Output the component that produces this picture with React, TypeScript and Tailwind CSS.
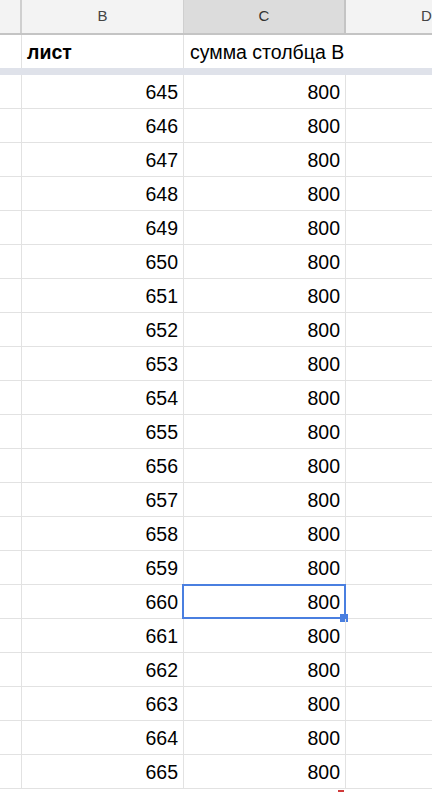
const rows = Array.from({ length: 21 }, (_, i) => 645 + i)

const grid = 'grid grid-cols-[22px_162px_162px_1fr]'

export default function App() {
  return (
    <div className="h-[792px] w-[432px] overflow-hidden bg-white font-['Liberation_Sans',Arial,sans-serif] text-black">
      {/* column headers */}
      <div className={`${grid} h-[35px] border-b-2 border-[#c4c4c4] text-[15px] text-[#444]`}>
        <div className="border-r-2 border-[#cfcfcf] bg-[#f3f3f3]" />
        <div className="flex items-center justify-center border-r border-[#cfcfcf] bg-[#f3f3f3]">B</div>
        <div className="flex items-center justify-center border-r-2 border-[#c4c4c4] bg-[#dcdcdc] text-[#333]">C</div>
        <div className="flex items-center overflow-hidden whitespace-nowrap bg-[#f3f3f3] pl-[75px]">D</div>
      </div>

      {/* frozen row, header text spills into D */}
      <div className={`${grid} h-[33px] text-[19.5px]`}>
        <div className="border-r border-[#e2e2e2]" />
        <div className="flex items-center border-r border-[#e2e2e2] pl-[5px] pt-[2px] font-bold">лист</div>
        <div className="relative z-10 flex items-center whitespace-nowrap pl-[6px] pt-[2px]">сумма столбца B</div>
        <div />
      </div>
      <div className="h-[7px] bg-[#dfe2ea]" />

      {rows.map((n) => {
        const selected = n === 660
        return (
          <div key={n} className={`${grid} h-[34px] text-[19.5px]`}>
            <div className="border-r border-b border-[#e2e2e2]" />
            <div className="flex items-center justify-end border-r border-b border-[#e2e2e2] pr-[5px] pt-[3px]">{n}</div>
            <div className="relative flex items-center justify-end border-r border-b border-[#e2e2e2] pr-[5px] pt-[3px]">
              800
              {selected && (
                <>
                  <div className="absolute -left-[2px] -top-[1px] h-[35px] w-[164px] border-2 border-[#4a7fe0]" />
                  <div className="absolute -bottom-[4px] -right-[3px] h-[8px] w-[8px] bg-[#4a7fe0]" />
                </>
              )}
            </div>
            <div className="border-b border-[#e2e2e2]" />
          </div>
        )
      })}
      <div className={`${grid} h-[4px]`}>
        <div />
        <div />
        <div className="relative">
          <div className="absolute right-[2px] top-[1px] h-[3px] w-[6px] bg-[#d03a3a]" />
        </div>
        <div />
      </div>
    </div>
  )
}
